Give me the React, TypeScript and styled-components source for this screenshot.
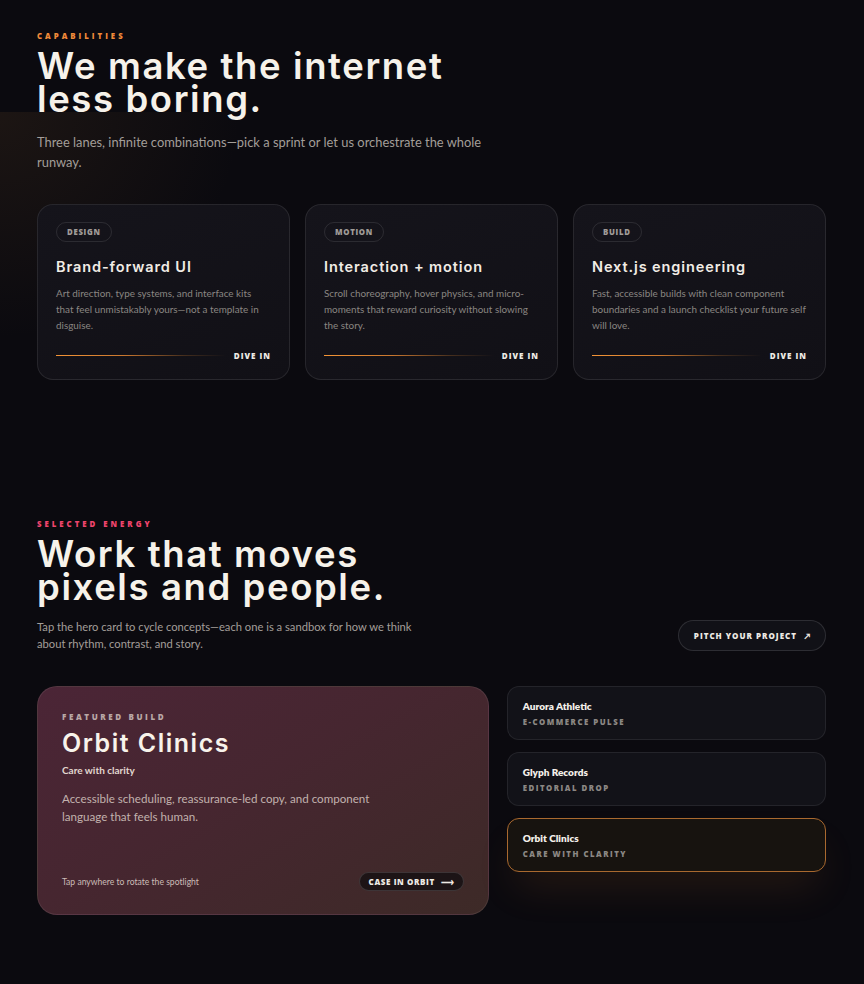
import React from 'react';
import styled, { createGlobalStyle } from 'styled-components';

const Global = createGlobalStyle`
  html, body { margin: 0; padding: 0; background: #0b0a0f; }
  body {
    font-family: Lato, "Noto Sans", sans-serif;
    color: #f3efe9;
    -webkit-font-smoothing: antialiased;
  }
  * { box-sizing: border-box; }
`;

const Page = styled.main`
  min-height: 984px;
  padding: 31px 38px 60px 37px;
  background:
    radial-gradient(ellipse 320px 300px at 0 0, rgba(90, 62, 34, 0.22), rgba(90, 62, 34, 0) 75%) 0 112px / 420px 340px no-repeat,
    #0b0a0f;
  overflow: hidden;
`;

const Section = styled.section<{ $top?: number }>`
  display: flex;
  flex-direction: column;
  margin-top: ${p => p.$top ?? 0}px;
`;

const Eyebrow = styled.div<{ $color: string }>`
  font-family: "Open Sans", Lato, sans-serif;
  font-size: 7.8px;
  font-weight: 800;
  letter-spacing: 3px;
  color: ${p => p.$color};
  text-transform: uppercase;
  line-height: 10px;
`;

const Headline = styled.h1`
  margin: 9px 0 0;
  font-family: Inter, "DejaVu Sans", sans-serif;
  font-size: 36.5px;
  font-weight: 600;
  line-height: 33px;
  letter-spacing: 1.6px;
  color: #f6f2ea;
`;

const HeadLine = styled.span`
  display: block;
`;

const Lead = styled.p<{ $size: number; $lh: number; $max: number }>`
  margin: 0;
  font-size: ${p => p.$size}px;
  line-height: ${p => p.$lh}px;
  max-width: ${p => p.$max}px;
  color: #a39e99;
`;

const CardGrid = styled.div`
  display: grid;
  grid-template-columns: repeat(3, 1fr);
  gap: 15px;
  margin-top: 32px;
`;

const Card = styled.article`
  display: flex;
  flex-direction: column;
  height: 176px;
  padding: 17px 18px 18px;
  border-radius: 16px;
  border: 1px solid rgba(255, 255, 255, 0.09);
  background: linear-gradient(160deg, #15141b 0%, #111016 100%);
`;

const Tag = styled.span`
  align-self: flex-start;
  padding: 5px 10px 5px;
  border-radius: 999px;
  border: 1px solid rgba(255, 255, 255, 0.1);
  font-family: "Open Sans", Lato, sans-serif;
  font-size: 7.8px;
  font-weight: 800;
  letter-spacing: 0.7px;
  line-height: 8px;
  color: #a09c98;
`;

const CardTitle = styled.h3`
  margin: 16px 0 0;
  font-family: Inter, "DejaVu Sans", sans-serif;
  font-size: 14.5px;
  font-weight: 600;
  line-height: 18px;
  letter-spacing: 0.9px;
  color: #f1ece5;
`;

const CardText = styled.p`
  margin: 9px 0 0;
  font-size: 9.9px;
  line-height: 16px;
  color: #8a8682;
`;

const CardFoot = styled.div`
  margin-top: auto;
  display: flex;
  align-items: center;
  gap: 8px;
`;

const Rule = styled.span`
  flex: 1;
  height: 1px;
  background: linear-gradient(90deg, #f39436 0%, #c9772f 40%, rgba(120, 75, 35, 0.5) 75%, rgba(120, 75, 35, 0) 100%);
`;

const SmallCaps = styled.span<{ $color?: string; $size?: number; $ls?: number }>`
  font-family: "Open Sans", Lato, sans-serif;
  font-size: ${p => p.$size ?? 8}px;
  font-weight: 800;
  letter-spacing: ${p => p.$ls ?? 1}px;
  color: ${p => p.$color ?? '#eeeae4'};
  text-transform: uppercase;
  white-space: nowrap;
`;

const LeadRow = styled.div`
  display: flex;
  align-items: center;
  justify-content: space-between;
  margin-top: 14px;
`;

const PillButton = styled.button`
  display: inline-flex;
  align-items: center;
  gap: 7px;
  height: 31px;
  padding: 0 15px;
  border-radius: 999px;
  border: 1px solid rgba(255, 255, 255, 0.12);
  background: #111117;
  color: #f0ece6;
  cursor: pointer;
`;

const WorkGrid = styled.div`
  display: grid;
  grid-template-columns: minmax(0, 1.415fr) minmax(0, 1fr);
  gap: 18px;
  margin-top: 34px;
  align-items: start;
`;

const Featured = styled.article`
  display: flex;
  flex-direction: column;
  height: 229px;
  padding: 24px 24px 23px;
  border-radius: 20px;
  border: 1px solid rgba(255, 255, 255, 0.08);
  background: linear-gradient(150deg, #4b2536 0%, #462630 45%, #3d2a27 100%);
`;

const FeaturedTitle = styled.h2`
  margin: 6px 0 0;
  font-family: Inter, "DejaVu Sans", sans-serif;
  font-size: 25px;
  font-weight: 600;
  line-height: 30px;
  letter-spacing: 1.5px;
  color: #f8f3eb;
`;

const Tagline = styled.div`
  margin-top: 6px;
  font-size: 10px;
  font-weight: 700;
  color: #e2d7d0;
`;

const FeaturedText = styled.p`
  margin: 14px 0 0;
  max-width: 330px;
  font-size: 11.6px;
  line-height: 18px;
  color: #c2b2ae;
`;

const FeaturedFoot = styled.div`
  margin-top: auto;
  display: flex;
  align-items: center;
  justify-content: space-between;
`;

const Hint = styled.span`
  font-size: 8.6px;
  color: #cbbcb7;
`;

const DarkPill = styled.span`
  display: inline-flex;
  align-items: center;
  gap: 6px;
  height: 19px;
  padding: 0 9px;
  border-radius: 999px;
  border: 1px solid rgba(255, 255, 255, 0.14);
  background: rgba(18, 14, 16, 0.75);
`;

const List = styled.div`
  display: flex;
  flex-direction: column;
  gap: 12px;
`;

const Item = styled.div<{ $active?: boolean }>`
  display: flex;
  flex-direction: column;
  justify-content: center;
  gap: 5px;
  height: 54px;
  padding: 0 15px;
  border-radius: 12px;
  border: 1px solid ${p => (p.$active ? '#a9692f' : 'rgba(255, 255, 255, 0.08)')};
  background: ${p => (p.$active ? '#17130f' : '#121218')};
  box-shadow: ${p => (p.$active ? '0 22px 40px -8px rgba(200, 110, 40, 0.14)' : 'none')};
`;

const ItemTitle = styled.div`
  font-size: 10px;
  font-weight: 800;
  color: #f4f0ea;
  line-height: 12px;
`;

const capabilities = [
  {
    tag: 'DESIGN',
    title: 'Brand-forward UI',
    text: 'Art direction, type systems, and interface kits that feel unmistakably yours—not a template in disguise.',
  },
  {
    tag: 'MOTION',
    title: 'Interaction + motion',
    text: 'Scroll choreography, hover physics, and micro-moments that reward curiosity without slowing the story.',
  },
  {
    tag: 'BUILD',
    title: 'Next.js engineering',
    text: 'Fast, accessible builds with clean component boundaries and a launch checklist your future self will love.',
  },
];

const projects = [
  { title: 'Aurora Athletic', sub: 'E-commerce pulse' },
  { title: 'Glyph Records', sub: 'Editorial drop' },
  { title: 'Orbit Clinics', sub: 'Care with clarity', active: true },
];

export default function App() {
  return (
    <>
      <Global />
      <Page>
        <Section>
          <Eyebrow $color="#f08a3a">Capabilities</Eyebrow>
          <Headline>
            <HeadLine>We make the internet</HeadLine>
            <HeadLine>less boring.</HeadLine>
          </Headline>
          <Lead $size={12.9} $lh={20} $max={470} style={{ marginTop: 16 }}>
            Three lanes, infinite combinations—pick a sprint or let us orchestrate the whole runway.
          </Lead>
          <CardGrid>
            {capabilities.map(c => (
              <Card key={c.tag}>
                <Tag>{c.tag}</Tag>
                <CardTitle>{c.title}</CardTitle>
                <CardText>{c.text}</CardText>
                <CardFoot>
                  <Rule />
                  <SmallCaps $size={8}>Dive in</SmallCaps>
                </CardFoot>
              </Card>
            ))}
          </CardGrid>
        </Section>

        <Section $top={139}>
          <Eyebrow $color="#f0456d">Selected energy</Eyebrow>
          <Headline>
            <HeadLine>Work that moves</HeadLine>
            <HeadLine>pixels and people.</HeadLine>
          </Headline>
          <LeadRow>
            <Lead $size={11.2} $lh={17} $max={400}>
              Tap the hero card to cycle concepts—each one is a sandbox for how we think about rhythm, contrast, and story.
            </Lead>
            <PillButton>
              <SmallCaps $size={8}>Pitch your project</SmallCaps>
              <SmallCaps $size={8} $ls={0}>↗</SmallCaps>
            </PillButton>
          </LeadRow>
          <WorkGrid>
            <Featured>
              <SmallCaps $size={8} $ls={2.6} $color="#b9a8a6">Featured build</SmallCaps>
              <FeaturedTitle>Orbit Clinics</FeaturedTitle>
              <Tagline>Care with clarity</Tagline>
              <FeaturedText>
                Accessible scheduling, reassurance-led copy, and component language that feels human.
              </FeaturedText>
              <FeaturedFoot>
                <Hint>Tap anywhere to rotate the spotlight</Hint>
                <DarkPill>
                  <SmallCaps $size={8} $ls={0.6}>Case in orbit</SmallCaps>
                  <SmallCaps $size={9} $ls={0}>⟶</SmallCaps>
                </DarkPill>
              </FeaturedFoot>
            </Featured>
            <List>
              {projects.map(p => (
                <Item key={p.title} $active={p.active}>
                  <ItemTitle>{p.title}</ItemTitle>
                  <SmallCaps $size={7.8} $ls={1.5} $color="#8c8884">{p.sub}</SmallCaps>
                </Item>
              ))}
            </List>
          </WorkGrid>
        </Section>
      </Page>
    </>
  );
}
